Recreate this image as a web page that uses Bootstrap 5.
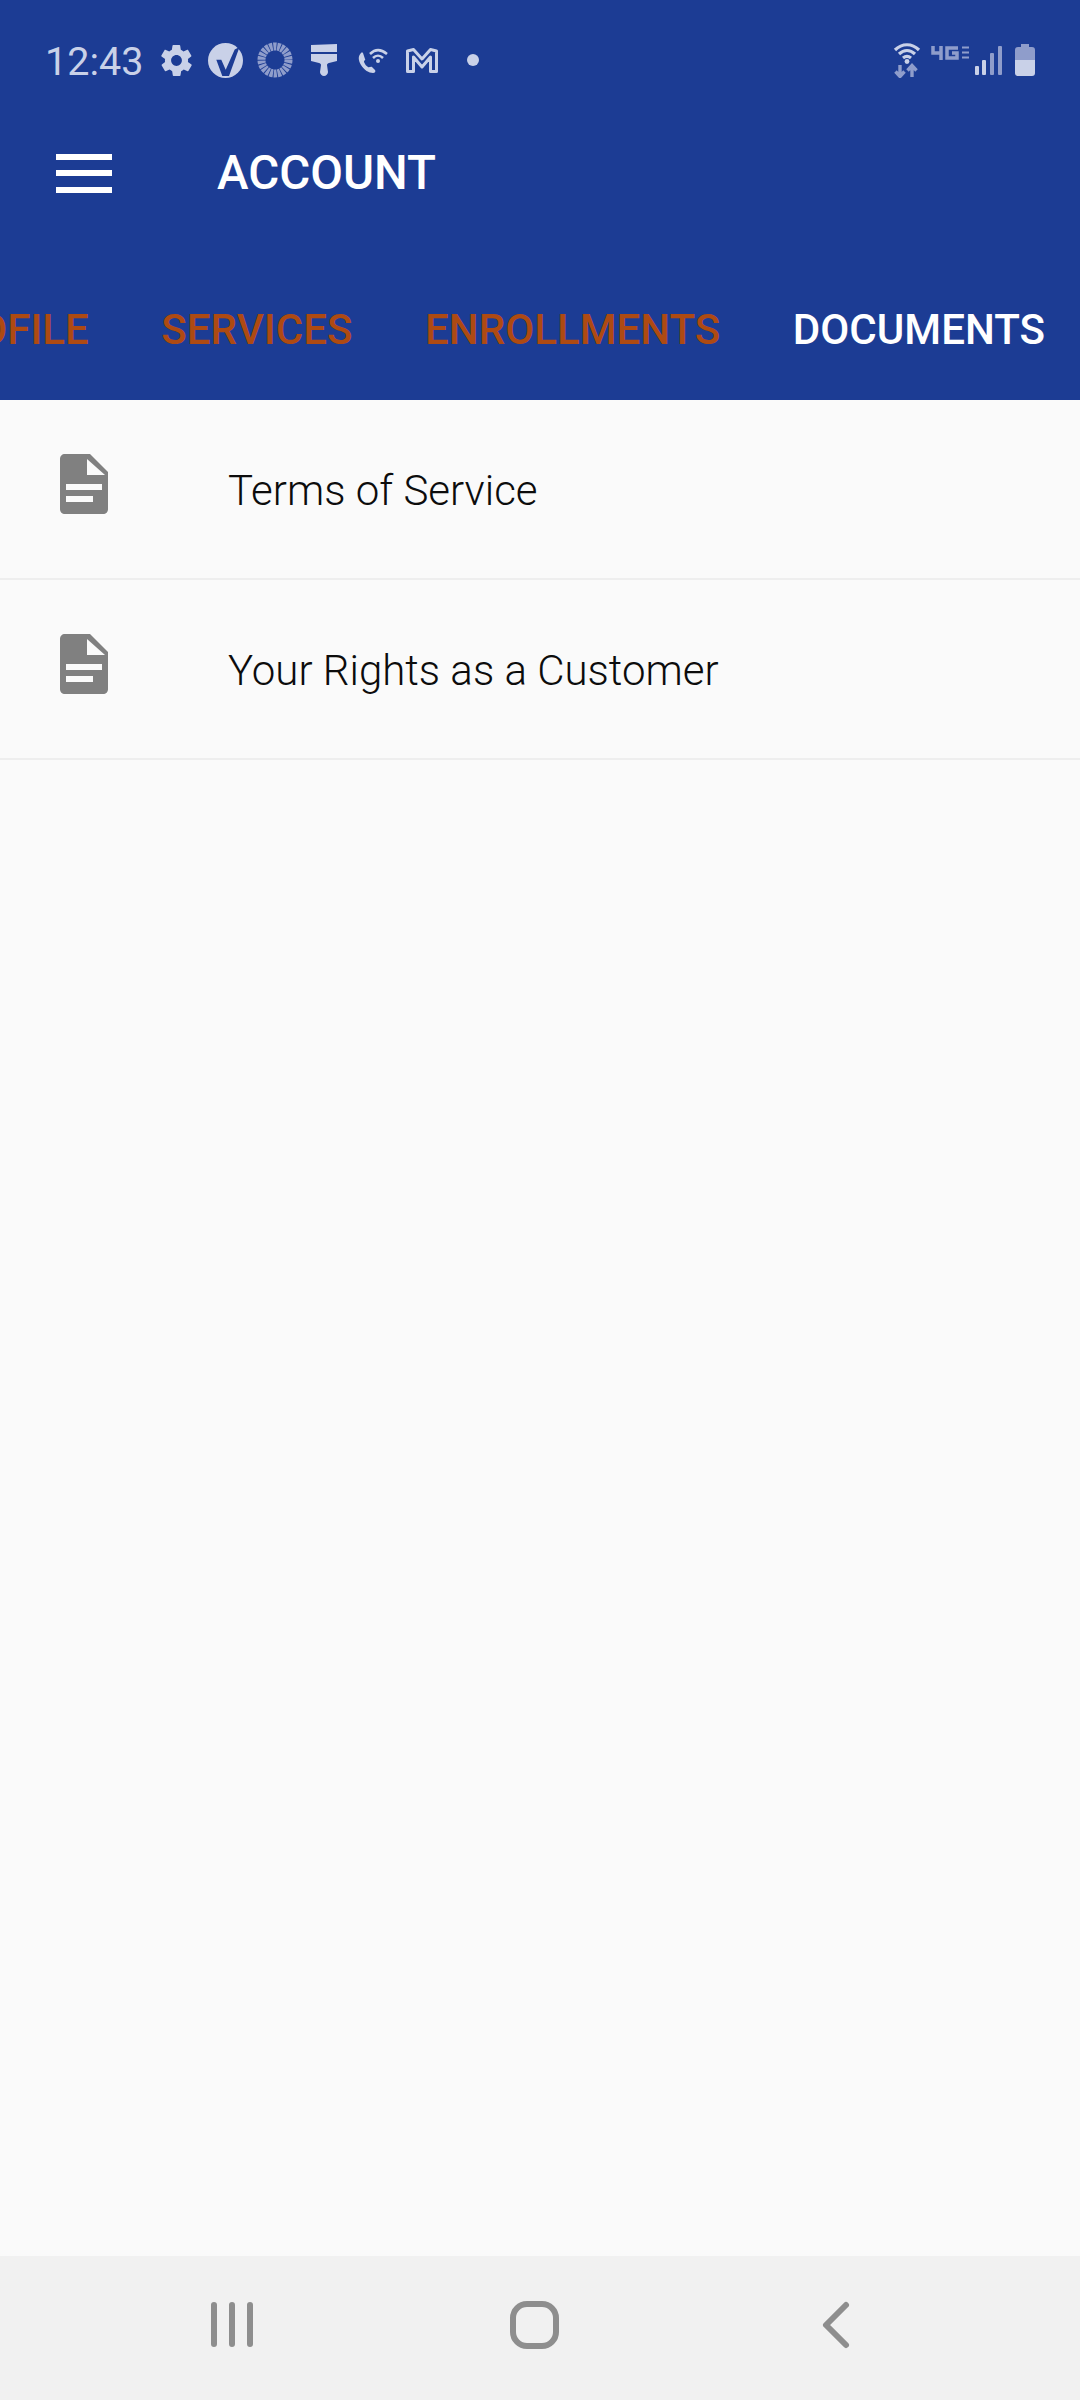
<!DOCTYPE html>
<html lang="en">
<head>
  <meta charset="UTF-8">
  <meta name="viewport" content="width=device-width, initial-scale=1">
  <title>Account</title>
  <link href="https://cdn.jsdelivr.net/npm/bootstrap@5.3.3/dist/css/bootstrap.min.css" rel="stylesheet">
  <style>
    body { background: #fafafa; font-family: Roboto, "Liberation Sans", sans-serif; }
    .screen { height: 2400px; width: 1080px; overflow: hidden; }
    .app-head { background: #1c3c94; height: 400px; }
    .status-row { height: 120px; padding: 0 45px; color: #c9d1e8; }
    .status-time { font-size: 39.5px; line-height: 1; width: 113px; padding-top: 3px; }
    .status-row svg { display: block; flex: none; }
    .tool-row { height: 106px; padding-left: 56px; }
    .burger { width: 56px; height: 39px; background: none; border: 0; padding: 0; }
    .burger-bar { height: 6px; }
    .page-title { font-size: 47.5px; font-weight: 500; color: #fff; margin: 2px 0 0 105px; line-height: 1; }
    .tab-strip { height: 174px; padding: 83px 35px 0 0; gap: 72.5px; flex-wrap: nowrap; justify-content: flex-end; overflow: hidden; }
    .tab-link { font-size: 42.1px; font-weight: 500; line-height: 1; color: #ae4a12; padding: 0; white-space: nowrap; }
    .tab-link:hover { color: #ae4a12; }
    .tab-link.active { color: #fff; }
    .list-group-flush > .doc-row, .list-group-flush > .doc-row:last-child { background: #fafafa; height: 180px; padding: 54px 0 0 60px; border: 0; border-bottom: 2px solid #eeeeee; }
    .doc-row svg { flex: none; }
    .doc-name { font-size: 42px; font-weight: 300; color: #0c0c0c; margin: 12px 0 0 120px; line-height: 1.2; }
    .sys-nav { background: #f1f1f1; height: 144px; flex: none; }
    .sys-nav svg { display: block; }
  </style>
</head>
<body>
  <div class="screen d-flex flex-column">
    <header class="app-head flex-shrink-0">
      <div class="status-row d-flex align-items-center">
        <span class="status-time">12:43</span>
        <svg width="37" height="37" viewBox="0 0 24 24" fill="#c9d1e8"><path d="M19.4 13c.1-.3.1-.7.1-1s0-.7-.1-1l2.1-1.6c.2-.1.2-.4.1-.6l-2-3.5c-.1-.2-.4-.3-.6-.2l-2.500 1c-.5-.4-1.100-.7-1.700-1l-.4-2.600c0-.3-.2-.5-.5-.5h-4c-.3 0-.5.2-.5.4l-.4 2.700c-.6.2-1.100.6-1.700 1l-2.500-1c-.2-.1-.5 0-.6.2l-2 3.500c-.1.2-.1.5.1.6L4.600 11c-.1.3-.1.7-.1 1s0 .7.1 1l-2.100 1.600c-.2.2-.2.4-.1.6l2 3.500c.1.2.4.3.6.2l2.500-1c.5.4 1.100.7 1.700 1l.4 2.600c0 .3.2.5.5.5h4c.3 0 .5-.2.5-.4l.4-2.700c.6-.2 1.100-.6 1.700-1l2.500 1c.2.1.5 0 .6-.2l2-3.500c.1-.2.1-.5-.1-.6L19.400 13zM12 15.500c-1.900 0-3.500-1.600-3.500-3.500s1.600-3.500 3.500-3.500 3.500 1.600 3.500 3.500-1.600 3.500-3.500 3.500z"/></svg>
        <svg style="margin-left:13px" width="35" height="35" viewBox="0 0 35 35"><circle cx="17.500" cy="17.500" r="17.500" fill="#c9d1e8"/><path d="M8.300 16.700h5l4.400 10L26.700 6.500 31.500 4 21 33h-6.700z" fill="#1c3c94"/></svg>
        <svg style="margin-left:14px" width="36" height="36" viewBox="0 0 36 36"><circle cx="18" cy="18" r="13.500" fill="none" stroke="#8f9dcb" stroke-width="8" stroke-dasharray="3.050 .8"/></svg>
        <svg style="margin-left:18px" width="26" height="32" viewBox="0 0 26 32" fill="#c9d1e8"><path d="M0 1l26-1v8H0zM0 10h26v7l-8 2c-1 0-2 1-2 2l1 7c0 2-2 4-4 4s-4-2-4-4l1-7c0-1-1-2-2-2l-8-2z"/></svg>
        <svg style="margin-left:21px" width="30" height="27" viewBox="0 0 30 27"><path d="M3 6c-3 3-3 7 0 12s8 8 12 8c2 0 3-2 2-3l-3-3c-1-1-3 1-4 0-2-1-3-3-4-5 0-2 2-2 1-3L5 6C4 5 4 5 3 6z" fill="#c9d1e8"/><path d="M12 7c5-5 11-5 17 0M15 11c3-3 7-3 10 0" fill="none" stroke="#c9d1e8" stroke-width="2.500"/><circle cx="20" cy="14" r="2" fill="#c9d1e8"/></svg>
        <svg style="margin-left:18px" width="32" height="25" viewBox="0 0 32 25"><path d="M1.500 23.500V3l6-1.500L16 11l8.500-9.500 6 1.500v20.500h-6V9L16 19 7.500 9v14.500z" fill="none" stroke="#c9d1e8" stroke-width="3" stroke-linejoin="round"/></svg>
        <svg style="margin-left:29px" width="12" height="12" viewBox="0 0 12 12"><circle cx="6" cy="6" r="6" fill="#c9d1e8"/></svg>
        <span class="ms-auto"></span>
        <svg width="28" height="36" viewBox="0 0 28 36"><path d="M2 8c7-7 17-7 24 0M6 12c5-4.500 11-4.500 16 0M10 16c2.500-2 5.500-2 8 0" fill="none" stroke="#c9d1e8" stroke-width="3.200"/><circle cx="14" cy="19.500" r="2.400" fill="#c9d1e8"/><path d="M7 23v11M2.500 29.500l4.500 5 4.500-5M19 35V24M14.500 28.500l4.500-5 4.500 5" fill="none" stroke="#8f9dcb" stroke-width="3.400"/></svg>
        <svg style="margin-left:10px;margin-bottom:14px" width="38" height="14" viewBox="0 0 38 14" fill="none" stroke="#8f9dcb" stroke-width="3.500"><path d="M2 0v7h9M10 0v14"/><path d="M27 2H16v10h10V7h-5"/><path d="M31 1.500h7M31 6.500h7M31 11.500h7" stroke-width="2"/></svg>
        <svg style="margin-left:6px" width="28" height="29" viewBox="0 0 28 29"><rect x="0" y="20" width="4" height="9" rx="1" fill="#c9d1e8"/><rect x="7" y="14" width="4" height="15" rx="1" fill="#c9d1e8"/><rect x="15" y="7" width="4" height="22" rx="1" fill="#8f9dcb"/><rect x="23" y="0" width="4" height="29" rx="1" fill="#8f9dcb"/></svg>
        <svg style="margin-left:12px" width="20" height="32" viewBox="0 0 20 32"><path d="M6 0h8v3h3c2 0 3 1 3 3v10H0V6c0-2 1-3 3-3h3z" fill="#8f9dcb"/><path d="M0 16h20v13c0 2-1 3-3 3H3c-2 0-3-1-3-3z" fill="#c9d1e8"/></svg>
      </div>
      <div class="tool-row d-flex align-items-center">
        <button class="burger d-flex flex-column justify-content-between" type="button" aria-label="Menu">
          <span class="d-block w-100 bg-white burger-bar"></span>
          <span class="d-block w-100 bg-white burger-bar"></span>
          <span class="d-block w-100 bg-white burger-bar"></span>
        </button>
        <h1 class="page-title">ACCOUNT</h1>
      </div>
      <nav class="nav tab-strip">
        <a class="nav-link tab-link" href="#">PROFILE</a>
        <a class="nav-link tab-link" href="#">SERVICES</a>
        <a class="nav-link tab-link" href="#">ENROLLMENTS</a>
        <a class="nav-link tab-link active" href="#">DOCUMENTS</a>
      </nav>
    </header>
    <main class="flex-grow-1">
      <div class="list-group list-group-flush">
        <a href="#" class="list-group-item doc-row d-flex align-items-start">
          <svg width="48" height="60" viewBox="0 0 48 60"><path d="M5 0h25l18 18v37c0 3-2 5-5 5H5c-3 0-5-2-5-5V5c0-3 2-5 5-5z" fill="#808080"/><path d="M27 5l18 16H27zM6 30h36v6H6zM6 42h27v6H6z" fill="#fafafa"/></svg>
          <span class="doc-name">Terms of Service</span>
        </a>
        <a href="#" class="list-group-item doc-row d-flex align-items-start">
          <svg width="48" height="60" viewBox="0 0 48 60"><path d="M5 0h25l18 18v37c0 3-2 5-5 5H5c-3 0-5-2-5-5V5c0-3 2-5 5-5z" fill="#808080"/><path d="M27 5l18 16H27zM6 30h36v6H6zM6 42h27v6H6z" fill="#fafafa"/></svg>
          <span class="doc-name">Your Rights as a Customer</span>
        </a>
      </div>
    </main>
    <footer class="sys-nav">
      <svg width="1080" height="144" viewBox="0 0 1080 144" fill="none" stroke="#8e8e8e" stroke-width="6" stroke-linecap="round" stroke-linejoin="round">
        <path d="M214 49v39M232 49v39M250 49v39"/>
        <rect x="513" y="48" width="43" height="42" rx="14"/>
        <path d="M846 49l-20 20 20 20"/>
      </svg>
    </footer>
  </div>
  <script src="https://cdn.jsdelivr.net/npm/bootstrap@5.3.3/dist/js/bootstrap.bundle.min.js"></script>
</body>
</html>
